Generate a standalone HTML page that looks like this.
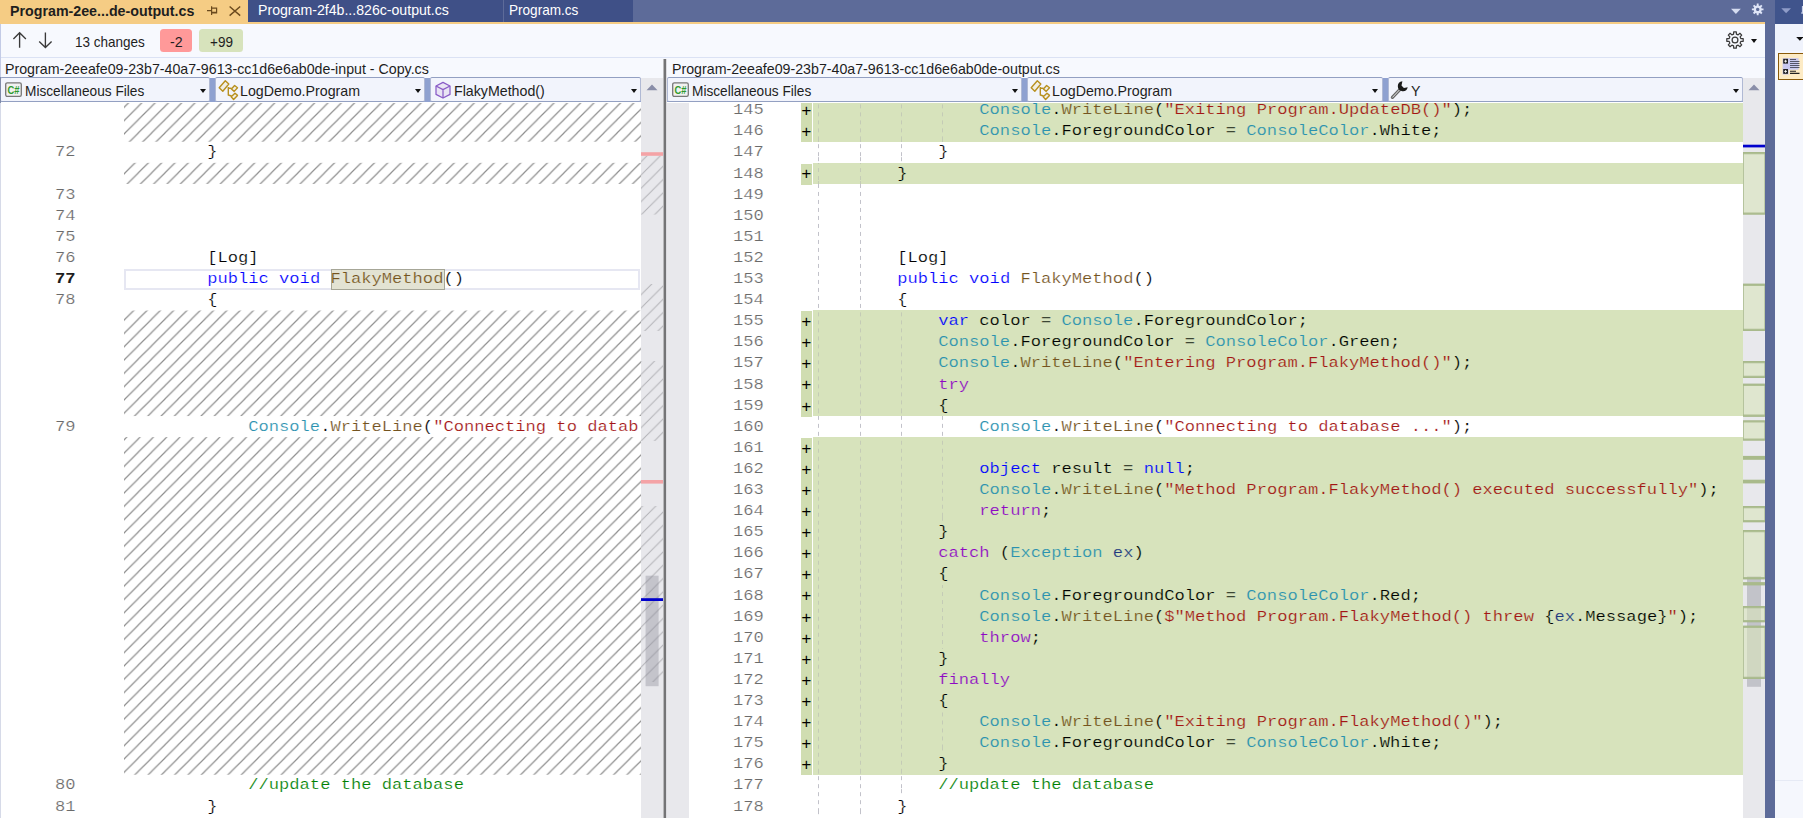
<!DOCTYPE html>
<html>
<head>
<meta charset="utf-8">
<title>Diff - Program-2eeafe09-23b7-40a7-9613-cc1d6e6ab0de-output.cs</title>
<style>
html,body{margin:0;padding:0;}
body{width:1803px;height:818px;overflow:hidden;position:relative;background:#fff;font-family:"Liberation Sans",sans-serif;color:#1e1e1e;}
svg{position:absolute;overflow:visible;}
.ui{display:inline-block;transform-origin:0 50%;transform:scaleX(0.947);font-size:15px;line-height:20px;white-space:nowrap;}
/* ---------- tab strip ---------- */
#tabstrip{position:absolute;left:0;top:0;width:1775px;height:24px;background:#5d6b99;}
#tabline{position:absolute;left:0;top:21.5px;width:1765px;height:2px;background:#f5cc84;}
.tab{position:absolute;top:0;height:21.5px;}
#tab1{left:0;width:248px;height:23.5px;background:#f5cc84;color:#1e1e1e;font-weight:bold;}
#tab1 .ui{position:absolute;left:9.8px;top:0.6px;transform:scaleX(0.949);}
#tab2{left:248px;width:255px;background:#3f5087;color:#fff;}
#tab3{left:504px;width:129px;background:#3f5087;color:#fff;}
#tab2 .ui{position:absolute;left:10px;top:0.3px;transform:scaleX(0.942);}
#tab3 .ui{position:absolute;left:5.4px;top:-0.2px;transform:scaleX(0.905);}
/* ---------- toolbar ---------- */
#toolbar{position:absolute;left:0;top:23.5px;width:1765px;height:33.5px;background:#f7f9fe;border-bottom:1px solid #dbe2f4;}
#toolbar .ui{position:absolute;top:8.6px;}
.badge{position:absolute;top:5.9px;height:22.8px;border-radius:3.5px;}
.badge .ui{position:absolute;top:2.2px !important;}
#b1{left:160px;width:32px;background:#ff9999;}
#b2{left:199px;width:44px;background:#d7e3bc;}
/* ---------- file name row ---------- */
#namerow{position:absolute;left:0;top:58px;width:1765px;height:20px;background:#f7f9fe;}
#namerow .ui{position:absolute;top:0.5px;}
/* ---------- dropdown row ---------- */
#ddrow{position:absolute;left:0;top:77.6px;width:1743px;height:24.8px;background:#8fa1d0;}
.dd{position:absolute;top:77.3px;height:25.2px;box-sizing:border-box;background:#f2f4fc;border:1.6px solid #93a0c2;border-left:1.2px solid #b0b9d4;border-right:1.2px solid #b0b9d4;border-radius:2px;}
.dd .ui{position:absolute;top:2.3px;}
.ar{position:absolute;width:0;height:0;border-left:3.7px solid transparent;border-right:3.7px solid transparent;border-top:4px solid #111;}
.dd .ar{right:3.3px;top:11.2px;}
/* ---------- panes ---------- */
#left{position:absolute;left:0;top:103px;width:641px;height:715px;overflow:hidden;background:#fff;}
#leftin{position:absolute;left:0;top:-103px;width:641px;height:818px;}
#right{position:absolute;left:667px;top:103px;width:1076px;height:715px;overflow:hidden;background:#fff;}
#rightin{position:absolute;left:-667px;top:-103px;width:1803px;height:818px;}
.margin{position:absolute;top:78px;width:22px;height:740px;background:#e8e8ec;overflow:hidden;}
#lmargin{left:641px;}
#rmargin{left:1742.6px;width:22.6px;}
#splitter{position:absolute;left:663px;top:58.6px;width:4px;height:760px;background:linear-gradient(90deg,#b8b8ba 0,#b8b8ba 0.8px,#747476 0.8px,#747476 3.3px,#dcdce0 3.3px);}
#rgutter{position:absolute;left:667px;top:103px;width:22px;height:715px;background:#e8e8ec;}
#lborder{position:absolute;left:0;top:24px;width:1px;height:794px;background:linear-gradient(180deg,#c3cbe6 0,#c3cbe6 53px,#7f8aa8 53px,#7f8aa8 79px,#d6dae8 79px);}
/* code text */
.cl,.ln,.pl{position:absolute;height:21.1px;line-height:21.1px;white-space:pre;font-family:"Liberation Mono",monospace;font-size:15.4px;color:#000;margin-top:0.3px;transform-origin:0 0;transform:scaleX(1.1119);}
.cl{-webkit-text-stroke:0.2px #fff;}
.cl.ga{-webkit-text-stroke:0.2px #d7e3bc;}
.cl.l{left:125.2px;width:461.9px;overflow:hidden;}
.cl.r{left:814.5px;}
.ln{color:#6a6a6a;text-align:left;-webkit-text-stroke:0.2px #fff;}
.ln.l{left:55px;}
.ln.r{left:733.1px;}
.ln.cur{color:#1e1e1e;font-weight:bold;-webkit-text-stroke:0;}
.pl{left:801.2px;color:#000;font-size:17px;transform:none;margin-top:1.2px;}
.ab{position:absolute;left:813px;width:929.6px;height:21.2px;background:#d7e3bc;}
.abp{left:801px;width:10.9px;background:#d0ddb1;}
.k{color:#0000ff;} .t{color:#2b91af;} .m{color:#74531f;} .s{color:#a31515;} .c{color:#8f08c4;} .g{color:#008000;} .v{color:#1f377f;}
.hlbox{position:absolute;left:331px;width:112px;height:19.6px;margin-top:0.1px;background:#e3e3d3;border:1px solid #a6a697;}
.curline{position:absolute;left:124px;width:512px;height:16.5px;margin-top:0.5px;border:2px solid #e6e7f2;box-sizing:content-box;}
.guide{position:absolute;width:1.3px;margin-left:-0.15px;background:repeating-linear-gradient(180deg,#c2c2ca 0,#c2c2ca 3.6px,transparent 3.6px,transparent 8px);}
.guide.g2{background:repeating-linear-gradient(180deg,#c4cbb6 0,#c4cbb6 3.6px,transparent 3.6px,transparent 8px);}
/* right tool panel */
#bluebar{position:absolute;left:1765px;top:0;width:10px;height:818px;background:#5d6b99;}
#rp{position:absolute;left:1775px;top:0;width:28px;height:818px;background:#f5f7fd;}
#rphead{position:absolute;left:0;top:0;width:28px;height:23.5px;background:#40548c;}
#rptool{position:absolute;left:0;top:23.5px;width:28px;height:27px;background:#f0f3fc;}
#rpbtn{position:absolute;left:3px;top:53px;width:30px;height:25px;background:#fdebc5;border:1px solid #8a5a0a;}
</style>
</head>
<body>
<!-- tab strip -->
<div id="tabstrip"></div>
<div id="tabline"></div>
<div class="tab" id="tab1"><span class="ui">Program-2ee...de-output.cs</span>
<svg style="left:206px;top:5px" width="36" height="12" viewBox="206 5 36 12"><g fill="none" stroke="#6b4a1e" stroke-width="1.2"><path d="M207 10.7H211.5M211.6 6.3V15M212 8.1H216.6V13H212M212 12.4H216.6"/><path d="M229.6 6.5L240.2 15.6M240.2 6.5L229.6 15.6" stroke-width="1.4"/></g></svg>
</div>
<div class="tab" id="tab2"><span class="ui">Program-2f4b...826c-output.cs</span></div>
<div class="tab" id="tab3"><span class="ui">Program.cs</span></div>
<svg style="left:1728px;top:2px" width="40" height="18" viewBox="1728 2 40 18">
<path d="M1731 8.8H1740.8L1735.9 14Z" fill="#d5dcf0"/>
<g transform="translate(1757.7 9.4)"><path d="M-0.96 -3.99L-0.92 -5.83L0.92 -5.83L0.96 -3.99L2.14 -3.50L3.47 -4.77L4.77 -3.47L3.50 -2.14L3.99 -0.96L5.83 -0.92L5.83 0.92L3.99 0.96L3.50 2.14L4.77 3.47L3.47 4.77L2.14 3.50L0.96 3.99L0.92 5.83L-0.92 5.83L-0.96 3.99L-2.14 3.50L-3.47 4.77L-4.77 3.47L-3.50 2.14L-3.99 0.96L-5.83 0.92L-5.83 -0.92L-3.99 -0.96L-3.50 -2.14L-4.77 -3.47L-3.47 -4.77L-2.14 -3.50ZM0 -1.7A1.7 1.7 0 1 0 0.01 -1.7Z" fill="#dfe5f7" fill-rule="evenodd"/></g>
</svg>

<!-- toolbar -->
<div id="toolbar">
  <svg style="left:10px;top:6px" width="46" height="20" viewBox="10 29.5 46 20"><g fill="none" stroke="#3a3a3a" stroke-width="1.35"><path d="M19.6 47.3V32.4M13.4 38.4L19.6 32.3L25.9 38.4"/><path d="M45.4 32V46.9M39.2 41L45.4 47.1L51.6 41"/></g></svg>
  <span class="ui" style="left:75px;transform:scaleX(0.9)">13 changes</span>
  <div class="badge" id="b1"><span class="ui" style="left:9.5px">-2</span></div>
  <div class="badge" id="b2"><span class="ui" style="left:10.5px;transform:scaleX(0.9)">+99</span></div>
  <svg style="left:1723.6px;top:5.5px" width="22" height="22" viewBox="-11 -11 22 22"><g fill="none" stroke="#3a3a3a" stroke-width="1.25" stroke-linejoin="round"><path d="M-1.40 -5.83L-1.30 -8.20L1.30 -8.20L1.40 -5.83L3.13 -5.12L4.88 -6.71L6.71 -4.88L5.12 -3.13L5.83 -1.40L8.20 -1.30L8.20 1.30L5.83 1.40L5.12 3.13L6.71 4.88L4.88 6.71L3.13 5.12L1.40 5.83L1.30 8.20L-1.30 8.20L-1.40 5.83L-3.13 5.12L-4.88 6.71L-6.71 4.88L-5.12 3.13L-5.83 1.40L-8.20 1.30L-8.20 -1.30L-5.83 -1.40L-5.12 -3.13L-6.71 -4.88L-4.88 -6.71L-3.13 -5.12Z"/><circle r="2.9"/></g></svg>
  <span class="ar" style="left:1751.2px;top:15.3px"></span>
</div>

<!-- file names -->
<div id="namerow">
  <span class="ui" style="left:5px">Program-2eeafe09-23b7-40a7-9613-cc1d6e6ab0de-input - Copy.cs</span>
  <span class="ui" style="left:672px">Program-2eeafe09-23b7-40a7-9613-cc1d6e6ab0de-output.cs</span>
</div>

<div id="ddrow"></div>
<!-- dropdowns left -->
<div class="dd" style="left:0;width:210.3px"><span class="ui" style="left:23.8px;transform:scaleX(0.911)">Miscellaneous Files</span><span class="ar"></span>
<svg style="left:3.7px;top:2.6px" width="18" height="17" viewBox="0 0 18 17"><rect x="0.7" y="1.8" width="15.6" height="13.6" rx="1.6" fill="#f1f1f1" stroke="#777" stroke-width="1.3"/><text x="2.6" y="12.8" font-family="Liberation Sans, sans-serif" font-weight="bold" font-size="10.7" fill="#2e9a2e" textLength="12" lengthAdjust="spacingAndGlyphs">C#</text></svg>
</div>
<div class="dd" style="left:215.3px;width:209.9px"><span class="ui" style="left:23.3px">LogDemo.Program</span><span class="ar"></span>
<svg style="left:0.4px;top:0.7px" width="22" height="22" viewBox="217 78.6 22 22"><g fill="#f1eee4" stroke="#b8901f" stroke-width="1.4" stroke-linejoin="round"><path d="M225.3 80.4L228.8 83.6L222.8 90.8L219.2 87.4Z"/><path d="M228.3 86.5V94.6L231.6 95.6M228.3 87.6L231.6 88" fill="none"/><path d="M234.6 85.1L237.5 87.4L234.2 91L231.4 88.6Z"/><path d="M235 92.8L237.5 95L233.6 99.2L231.2 96.4Z"/></g></svg>
</div>
<div class="dd" style="left:430.3px;width:210.7px"><span class="ui" style="left:23.1px">FlakyMethod()</span><span class="ar"></span>
<svg style="left:2.3px;top:2.7px" width="18" height="19" viewBox="434 81 18 19"><g fill="#e9e4f4" stroke="#8a5cc7" stroke-width="1.25" stroke-linejoin="round"><path d="M443 82.4L450 86V94.4L443 98L436 94.4V86Z"/><path d="M436 86L443 89.6L450 86M443 89.6V98" fill="none"/></g></svg>
</div>
<!-- dropdowns right -->
<div class="dd" style="left:667px;width:355.3px"><span class="ui" style="left:23.8px;transform:scaleX(0.911)">Miscellaneous Files</span><span class="ar"></span>
<svg style="left:3.7px;top:2.6px" width="18" height="17" viewBox="0 0 18 17"><rect x="0.7" y="1.8" width="15.6" height="13.6" rx="1.6" fill="#f1f1f1" stroke="#777" stroke-width="1.3"/><text x="2.6" y="12.8" font-family="Liberation Sans, sans-serif" font-weight="bold" font-size="10.7" fill="#2e9a2e" textLength="12" lengthAdjust="spacingAndGlyphs">C#</text></svg>
</div>
<div class="dd" style="left:1027.3px;width:355.4px"><span class="ui" style="left:23.3px">LogDemo.Program</span><span class="ar"></span>
<svg style="left:0.4px;top:0.7px" width="22" height="22" viewBox="217 78.6 22 22"><g fill="#f1eee4" stroke="#b8901f" stroke-width="1.4" stroke-linejoin="round"><path d="M225.3 80.4L228.8 83.6L222.8 90.8L219.2 87.4Z"/><path d="M228.3 86.5V94.6L231.6 95.6M228.3 87.6L231.6 88" fill="none"/><path d="M234.6 85.1L237.5 87.4L234.2 91L231.4 88.6Z"/><path d="M235 92.8L237.5 95L233.6 99.2L231.2 96.4Z"/></g></svg>
</div>
<div class="dd" style="left:1387.7px;width:355.3px"><span class="ui" style="left:22.8px">Y</span><span class="ar"></span>
<svg style="left:0.4px;top:0.4px" width="20" height="20" viewBox="1390 79 20 20"><path d="M1393.4 97.4L1400.8 89.6" stroke="#666" stroke-width="3.2" stroke-linecap="round" fill="none"/><path d="M1393.6 97.2L1400.6 89.8" stroke="#e4e4e4" stroke-width="1" stroke-linecap="round" fill="none"/><path d="M1403.4 81.2A5 5 0 1 0 1408.7 87.2L1404.9 88.1L1402.5 85.6Z" fill="#1a1a1a"/></svg>
</div>

<!-- left pane -->
<div id="left"><div id="leftin">
<svg style="left:0;top:0" width="641" height="818" viewBox="0 0 641 818">
<defs><pattern id="hp" width="13.3" height="13.3" patternUnits="userSpaceOnUse" x="5.3" y="0"><path d="M-1 14.3L14.3 -1M-1 1L1 -1M12.3 14.3L14.3 12.3" stroke="#8e8e8e" stroke-width="1.2" fill="none"/></pattern></defs>
<rect x="124" y="99.55" width="517" height="42.20" fill="url(#hp)"/>
<rect x="124" y="162.85" width="517" height="21.10" fill="url(#hp)"/>
<rect x="124" y="310.55" width="517" height="105.50" fill="url(#hp)"/>
<rect x="124" y="437.15" width="517" height="337.60" fill="url(#hp)"/>
</svg>
<div class="ln l" style="top:142.15px">72</div>
<div class="cl l" style="top:142.15px">        }</div>
<div class="ln l" style="top:184.35px">73</div>
<div class="ln l" style="top:205.45px">74</div>
<div class="ln l" style="top:226.55px">75</div>
<div class="ln l" style="top:247.65px">76</div>
<div class="cl l" style="top:247.65px">        [Log]</div>
<div class="curline" style="top:268.75px"></div>
<div class="hlbox" style="top:268.75px"></div>
<div class="ln l cur" style="top:268.75px">77</div>
<div class="cl l" style="top:268.75px">        <span class="k">public</span> <span class="k">void</span> <span class="m" style="-webkit-text-stroke-color:#e3e3d3">FlakyMethod</span>()</div>
<div class="ln l" style="top:289.85px">78</div>
<div class="cl l" style="top:289.85px">        {</div>
<div class="ln l" style="top:416.45px">79</div>
<div class="cl l" style="top:416.45px">            <span class="t">Console</span>.<span class="m">WriteLine</span>(<span class="s">"Connecting to database ..."</span>);</div>
<div class="ln l" style="top:775.15px">80</div>
<div class="cl l" style="top:775.15px">            <span class="g">//update the database</span></div>
<div class="ln l" style="top:796.25px">81</div>
<div class="cl l" style="top:796.25px">        }</div>
</div></div>
<div class="margin" id="lmargin">
<svg style="left:0;top:0" width="22" height="740" viewBox="641 78 22 740">
<defs><pattern id="hp2" width="13.3" height="13.3" patternUnits="userSpaceOnUse" x="4.8" y="0"><path d="M-1 14.3L14.3 -1M-1 1L1 -1M12.3 14.3L14.3 12.3" stroke="#b2b2b6" stroke-width="1" fill="none"/></pattern></defs>
<path d="M646.5 90.2H657.5L652 84.6Z" fill="#8a8ea8"/>
<rect x="641" y="155.7" width="22" height="58.9" fill="url(#hp2)"/>
<rect x="641" y="284.0" width="22" height="47.0" fill="url(#hp2)"/>
<rect x="641" y="361.0" width="22" height="80.0" fill="url(#hp2)"/>
<rect x="641" y="506.0" width="22" height="176.0" fill="url(#hp2)"/>
<rect x="641" y="152.2" width="22" height="3.6" fill="#f4a3a6"/>
<rect x="641" y="480" width="22" height="3.6" fill="#f4a3a6"/>
<rect x="645.6" y="575.7" width="13" height="110.5" fill="#8a8a96" fill-opacity="0.38"/>
<rect x="641" y="598.2" width="22" height="2.8" fill="#0000cd"/>
</svg>
</div>
<div id="splitter"></div>

<!-- right pane -->
<div id="right"><div id="rightin">
<div id="rgutter" style="left:667px;top:103px"></div>
<div class="ab" style="top:99.40px"></div><div class="ab abp" style="top:100.20px"></div>
<div class="ab" style="top:120.50px"></div><div class="ab abp" style="top:121.30px"></div>
<div class="ab" style="top:162.70px"></div><div class="ab abp" style="top:163.50px"></div>
<div class="ab" style="top:310.40px"></div><div class="ab abp" style="top:311.20px"></div>
<div class="ab" style="top:331.50px"></div><div class="ab abp" style="top:332.30px"></div>
<div class="ab" style="top:352.60px"></div><div class="ab abp" style="top:353.40px"></div>
<div class="ab" style="top:373.70px"></div><div class="ab abp" style="top:374.50px"></div>
<div class="ab" style="top:394.80px"></div><div class="ab abp" style="top:395.60px"></div>
<div class="ab" style="top:437.00px"></div><div class="ab abp" style="top:437.80px"></div>
<div class="ab" style="top:458.10px"></div><div class="ab abp" style="top:458.90px"></div>
<div class="ab" style="top:479.20px"></div><div class="ab abp" style="top:480.00px"></div>
<div class="ab" style="top:500.30px"></div><div class="ab abp" style="top:501.10px"></div>
<div class="ab" style="top:521.40px"></div><div class="ab abp" style="top:522.20px"></div>
<div class="ab" style="top:542.50px"></div><div class="ab abp" style="top:543.30px"></div>
<div class="ab" style="top:563.60px"></div><div class="ab abp" style="top:564.40px"></div>
<div class="ab" style="top:584.70px"></div><div class="ab abp" style="top:585.50px"></div>
<div class="ab" style="top:605.80px"></div><div class="ab abp" style="top:606.60px"></div>
<div class="ab" style="top:626.90px"></div><div class="ab abp" style="top:627.70px"></div>
<div class="ab" style="top:648.00px"></div><div class="ab abp" style="top:648.80px"></div>
<div class="ab" style="top:669.10px"></div><div class="ab abp" style="top:669.90px"></div>
<div class="ab" style="top:690.20px"></div><div class="ab abp" style="top:691.00px"></div>
<div class="ab" style="top:711.30px"></div><div class="ab abp" style="top:712.10px"></div>
<div class="ab" style="top:732.40px"></div><div class="ab abp" style="top:733.20px"></div>
<div class="ab" style="top:753.50px"></div><div class="ab abp" style="top:754.30px"></div>
<div class="guide g2" style="left:818px;top:99.95px;height:42.20px;background-position:0 -3.65px"></div>
<div class="guide" style="left:818px;top:142.15px;height:21.10px;background-position:0 -5.85px"></div>
<div class="guide g2" style="left:818px;top:163.25px;height:21.10px;background-position:0 -2.95px"></div>
<div class="guide" style="left:818px;top:184.35px;height:126.60px;background-position:0 -0.05px"></div>
<div class="guide g2" style="left:818px;top:310.95px;height:105.50px;background-position:0 -6.65px"></div>
<div class="guide" style="left:818px;top:416.45px;height:21.10px;background-position:0 -0.15px"></div>
<div class="guide g2" style="left:818px;top:437.55px;height:337.60px;background-position:0 -5.25px"></div>
<div class="guide" style="left:818px;top:775.15px;height:42.20px;background-position:0 -6.85px"></div>
<div class="guide g2" style="left:860px;top:99.95px;height:42.20px;background-position:0 -3.65px"></div>
<div class="guide" style="left:860px;top:142.15px;height:21.10px;background-position:0 -5.85px"></div>
<div class="guide g2" style="left:860px;top:163.25px;height:21.10px;background-position:0 -2.95px"></div>
<div class="guide" style="left:860px;top:184.35px;height:126.60px;background-position:0 -0.05px"></div>
<div class="guide g2" style="left:860px;top:310.95px;height:105.50px;background-position:0 -6.65px"></div>
<div class="guide" style="left:860px;top:416.45px;height:21.10px;background-position:0 -0.15px"></div>
<div class="guide g2" style="left:860px;top:437.55px;height:337.60px;background-position:0 -5.25px"></div>
<div class="guide" style="left:860px;top:775.15px;height:42.20px;background-position:0 -6.85px"></div>
<div class="guide g2" style="left:901px;top:99.95px;height:42.20px;background-position:0 -3.65px"></div>
<div class="guide" style="left:901px;top:142.15px;height:21.10px;background-position:0 -5.85px"></div>
<div class="guide g2" style="left:901px;top:310.95px;height:105.50px;background-position:0 -6.65px"></div>
<div class="guide" style="left:901px;top:416.45px;height:21.10px;background-position:0 -0.15px"></div>
<div class="guide g2" style="left:901px;top:437.55px;height:337.60px;background-position:0 -5.25px"></div>
<div class="guide" style="left:901px;top:775.15px;height:21.10px;background-position:0 -6.85px"></div>
<div class="guide g2" style="left:942px;top:99.95px;height:42.20px;background-position:0 -3.65px"></div>
<div class="guide" style="left:942px;top:416.45px;height:21.10px;background-position:0 -0.15px"></div>
<div class="guide g2" style="left:942px;top:437.55px;height:84.40px;background-position:0 -5.25px"></div>
<div class="guide g2" style="left:942px;top:585.25px;height:63.30px;background-position:0 -0.95px"></div>
<div class="guide g2" style="left:942px;top:711.85px;height:42.20px;background-position:0 -7.55px"></div>
<div class="pl" style="top:99.95px">+</div>
<div class="ln r" style="top:99.95px">145</div>
<div class="cl r ga" style="top:99.95px">                <span class="t">Console</span>.<span class="m">WriteLine</span>(<span class="s">"Exiting Program.UpdateDB()"</span>);</div>
<div class="pl" style="top:121.05px">+</div>
<div class="ln r" style="top:121.05px">146</div>
<div class="cl r ga" style="top:121.05px">                <span class="t">Console</span>.ForegroundColor = <span class="t">ConsoleColor</span>.White;</div>
<div class="ln r" style="top:142.15px">147</div>
<div class="cl r" style="top:142.15px">            }</div>
<div class="pl" style="top:163.25px">+</div>
<div class="ln r" style="top:163.25px">148</div>
<div class="cl r ga" style="top:163.25px">        }</div>
<div class="ln r" style="top:184.35px">149</div>
<div class="ln r" style="top:205.45px">150</div>
<div class="ln r" style="top:226.55px">151</div>
<div class="ln r" style="top:247.65px">152</div>
<div class="cl r" style="top:247.65px">        [Log]</div>
<div class="ln r" style="top:268.75px">153</div>
<div class="cl r" style="top:268.75px">        <span class="k">public</span> <span class="k">void</span> <span class="m">FlakyMethod</span>()</div>
<div class="ln r" style="top:289.85px">154</div>
<div class="cl r" style="top:289.85px">        {</div>
<div class="pl" style="top:310.95px">+</div>
<div class="ln r" style="top:310.95px">155</div>
<div class="cl r ga" style="top:310.95px">            <span class="k">var</span> color = <span class="t">Console</span>.ForegroundColor;</div>
<div class="pl" style="top:332.05px">+</div>
<div class="ln r" style="top:332.05px">156</div>
<div class="cl r ga" style="top:332.05px">            <span class="t">Console</span>.ForegroundColor = <span class="t">ConsoleColor</span>.Green;</div>
<div class="pl" style="top:353.15px">+</div>
<div class="ln r" style="top:353.15px">157</div>
<div class="cl r ga" style="top:353.15px">            <span class="t">Console</span>.<span class="m">WriteLine</span>(<span class="s">"Entering Program.FlakyMethod()"</span>);</div>
<div class="pl" style="top:374.25px">+</div>
<div class="ln r" style="top:374.25px">158</div>
<div class="cl r ga" style="top:374.25px">            <span class="c">try</span></div>
<div class="pl" style="top:395.35px">+</div>
<div class="ln r" style="top:395.35px">159</div>
<div class="cl r ga" style="top:395.35px">            {</div>
<div class="ln r" style="top:416.45px">160</div>
<div class="cl r" style="top:416.45px">                <span class="t">Console</span>.<span class="m">WriteLine</span>(<span class="s">"Connecting to database ..."</span>);</div>
<div class="pl" style="top:437.55px">+</div>
<div class="ln r" style="top:437.55px">161</div>
<div class="pl" style="top:458.65px">+</div>
<div class="ln r" style="top:458.65px">162</div>
<div class="cl r ga" style="top:458.65px">                <span class="k">object</span> result = <span class="k">null</span>;</div>
<div class="pl" style="top:479.75px">+</div>
<div class="ln r" style="top:479.75px">163</div>
<div class="cl r ga" style="top:479.75px">                <span class="t">Console</span>.<span class="m">WriteLine</span>(<span class="s">"Method Program.FlakyMethod() executed successfully"</span>);</div>
<div class="pl" style="top:500.85px">+</div>
<div class="ln r" style="top:500.85px">164</div>
<div class="cl r ga" style="top:500.85px">                <span class="c">return</span>;</div>
<div class="pl" style="top:521.95px">+</div>
<div class="ln r" style="top:521.95px">165</div>
<div class="cl r ga" style="top:521.95px">            }</div>
<div class="pl" style="top:543.05px">+</div>
<div class="ln r" style="top:543.05px">166</div>
<div class="cl r ga" style="top:543.05px">            <span class="c">catch</span> (<span class="t">Exception</span> <span class="v">ex</span>)</div>
<div class="pl" style="top:564.15px">+</div>
<div class="ln r" style="top:564.15px">167</div>
<div class="cl r ga" style="top:564.15px">            {</div>
<div class="pl" style="top:585.25px">+</div>
<div class="ln r" style="top:585.25px">168</div>
<div class="cl r ga" style="top:585.25px">                <span class="t">Console</span>.ForegroundColor = <span class="t">ConsoleColor</span>.Red;</div>
<div class="pl" style="top:606.35px">+</div>
<div class="ln r" style="top:606.35px">169</div>
<div class="cl r ga" style="top:606.35px">                <span class="t">Console</span>.<span class="m">WriteLine</span>(<span class="s">$"Method Program.FlakyMethod() threw </span>{<span class="v">ex</span>.Message}<span class="s">"</span>);</div>
<div class="pl" style="top:627.45px">+</div>
<div class="ln r" style="top:627.45px">170</div>
<div class="cl r ga" style="top:627.45px">                <span class="c">throw</span>;</div>
<div class="pl" style="top:648.55px">+</div>
<div class="ln r" style="top:648.55px">171</div>
<div class="cl r ga" style="top:648.55px">            }</div>
<div class="pl" style="top:669.65px">+</div>
<div class="ln r" style="top:669.65px">172</div>
<div class="cl r ga" style="top:669.65px">            <span class="c">finally</span></div>
<div class="pl" style="top:690.75px">+</div>
<div class="ln r" style="top:690.75px">173</div>
<div class="cl r ga" style="top:690.75px">            {</div>
<div class="pl" style="top:711.85px">+</div>
<div class="ln r" style="top:711.85px">174</div>
<div class="cl r ga" style="top:711.85px">                <span class="t">Console</span>.<span class="m">WriteLine</span>(<span class="s">"Exiting Program.FlakyMethod()"</span>);</div>
<div class="pl" style="top:732.95px">+</div>
<div class="ln r" style="top:732.95px">175</div>
<div class="cl r ga" style="top:732.95px">                <span class="t">Console</span>.ForegroundColor = <span class="t">ConsoleColor</span>.White;</div>
<div class="pl" style="top:754.05px">+</div>
<div class="ln r" style="top:754.05px">176</div>
<div class="cl r ga" style="top:754.05px">            }</div>
<div class="ln r" style="top:775.15px">177</div>
<div class="cl r" style="top:775.15px">            <span class="g">//update the database</span></div>
<div class="ln r" style="top:796.25px">178</div>
<div class="cl r" style="top:796.25px">        }</div>
</div></div>
<div class="margin" id="rmargin">
<svg style="left:0;top:0" width="22" height="740" viewBox="1743 78 22 740">
<path d="M1748.5 90.2H1759.5L1754 84.6Z" fill="#8a8ea8"/>
<rect x="1747" y="576.2" width="14" height="110.6" fill="#c2c3c9"/>
<rect x="1743.4" y="152.5" width="21.4" height="61.6" fill="#d9e5bc" fill-opacity="0.6" stroke="#adbd92" stroke-width="0.9"/>
<path d="M1743 153.1H1765.2M1743 213.5H1765.2" stroke="#a6b788" stroke-opacity="0.85" stroke-width="2.2"/>
<rect x="1743.4" y="284.2" width="21.4" height="46.3" fill="#d9e5bc" fill-opacity="0.6" stroke="#adbd92" stroke-width="0.9"/>
<path d="M1743 284.8H1765.2M1743 329.9H1765.2" stroke="#a6b788" stroke-opacity="0.85" stroke-width="2.2"/>
<rect x="1743.4" y="361.5" width="21.4" height="16.0" fill="#d9e5bc" fill-opacity="0.6" stroke="#adbd92" stroke-width="0.9"/>
<path d="M1743 362.1H1765.2M1743 376.9H1765.2" stroke="#a6b788" stroke-opacity="0.85" stroke-width="2.2"/>
<rect x="1743.4" y="384.2" width="21.4" height="32.0" fill="#d9e5bc" fill-opacity="0.6" stroke="#adbd92" stroke-width="0.9"/>
<path d="M1743 384.8H1765.2M1743 415.6H1765.2" stroke="#a6b788" stroke-opacity="0.85" stroke-width="2.2"/>
<rect x="1743.4" y="420.9" width="21.4" height="19.2" fill="#d9e5bc" fill-opacity="0.6" stroke="#adbd92" stroke-width="0.9"/>
<path d="M1743 421.5H1765.2M1743 439.5H1765.2" stroke="#a6b788" stroke-opacity="0.85" stroke-width="2.2"/>
<rect x="1743.4" y="506.5" width="21.4" height="15.2" fill="#d9e5bc" fill-opacity="0.6" stroke="#adbd92" stroke-width="0.9"/>
<path d="M1743 507.1H1765.2M1743 521.1H1765.2" stroke="#a6b788" stroke-opacity="0.85" stroke-width="2.2"/>
<rect x="1743.4" y="530.5" width="21.4" height="48.3" fill="#d9e5bc" fill-opacity="0.6" stroke="#adbd92" stroke-width="0.9"/>
<path d="M1743 531.1H1765.2M1743 578.2H1765.2" stroke="#a6b788" stroke-opacity="0.85" stroke-width="2.2"/>
<rect x="1743.4" y="606.5" width="21.4" height="15.2" fill="#d9e5bc" fill-opacity="0.6" stroke="#adbd92" stroke-width="0.9"/>
<path d="M1743 607.1H1765.2M1743 621.1H1765.2" stroke="#a6b788" stroke-opacity="0.85" stroke-width="2.2"/>
<rect x="1743.4" y="626.2" width="21.4" height="52.3" fill="#d9e5bc" fill-opacity="0.6" stroke="#adbd92" stroke-width="0.9"/>
<path d="M1743 626.8H1765.2M1743 677.9H1765.2" stroke="#a6b788" stroke-opacity="0.85" stroke-width="2.2"/>
<rect x="1743" y="455.9" width="22.2" height="3.9" fill="#a9ba8b"/>
<rect x="1743" y="479.7" width="22.2" height="3.7" fill="#a9ba8b"/>
<rect x="1743" y="582.1" width="22.2" height="3.3" fill="#a9ba8b"/>
<rect x="1743" y="144.7" width="23" height="2.7" fill="#0000cd"/>
</svg>
</div>
<div id="lborder"></div>

<div id="bluebar"></div>
<div id="rp"><div id="rphead"></div><div id="rptool"></div><div style="position:absolute;left:0;top:779.5px;width:28px;height:1px;background:#e6eaf5"></div>
<svg style="left:0;top:0" width="28" height="60" viewBox="1775 0 28 60"><path d="M1781.3 8.3H1791L1786.1 13.3Z" fill="#8f9cc8"/><path d="M1802.6 6V13M1801.3 13H1806" stroke="#c8d0ea" stroke-width="1.4" fill="none"/><path d="M1796.2 37H1803.6L1799.9 40.8Z" fill="#111"/></svg>
<div id="rpbtn">
<svg style="left:0;top:0" width="26" height="25" viewBox="1779 54 26 25"><rect x="1782.6" y="58.2" width="16" height="11.5" fill="#c8c8f0"/><rect x="1782.6" y="68.5" width="6" height="6" fill="#c8c8f0"/><g fill="#222"><rect x="1783.2" y="58.8" width="4.8" height="4.8"/><rect x="1783.2" y="69" width="4.8" height="4.8"/></g><g stroke="#fff" stroke-width="0.9"><path d="M1784.2 61.2H1787M1785.6 59.8V62.6M1784.2 71.4H1787M1785.6 70V72.8"/></g><g stroke="#55556a" stroke-width="1"><path d="M1790 59.5H1796M1790 61.5H1799.5M1790 63.5H1799.5M1790 65.5H1799.5M1790 67.5H1799.5"/></g><g stroke="#222" stroke-width="1.1"><path d="M1790 71.2H1796M1790 73.4H1799.5"/></g></svg>
</div>
</div>
</body>
</html>
